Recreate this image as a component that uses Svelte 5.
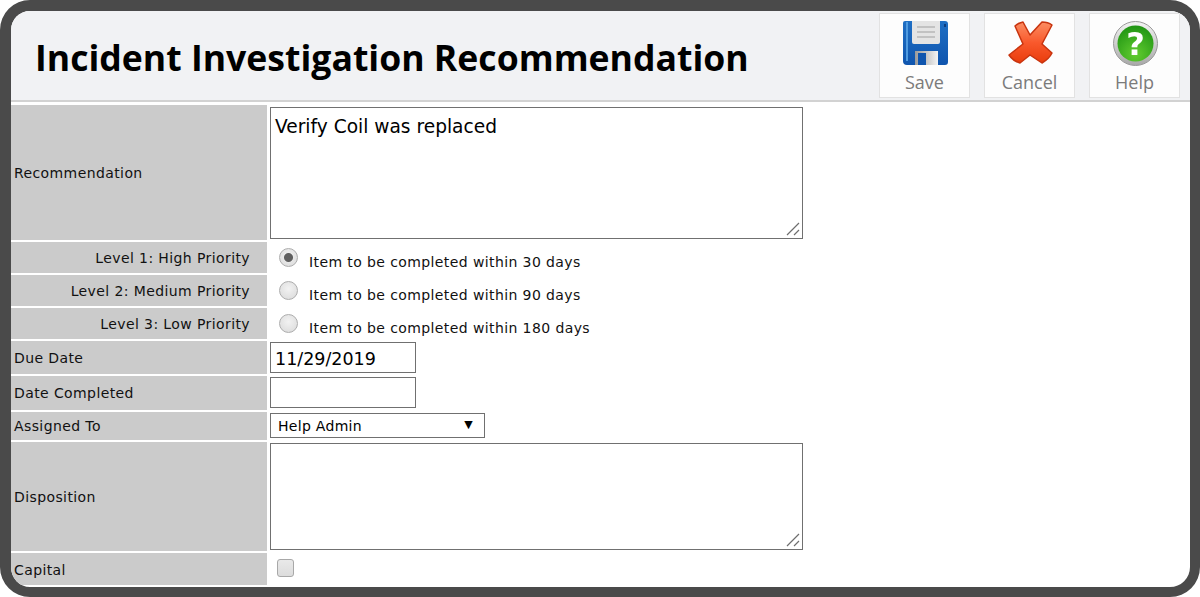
<script>
	let recommendation = $state('Verify Coil was replaced');
	let priority = $state(1);
	let dueDate = $state('11/29/2019');
	let completed = $state('');
	let assigned = $state('Help Admin');
	let disposition = $state('');
	let capital = $state(false);

	const levels = [
		{ id: 1, label: 'Level 1: High Priority', text: 'Item to be completed within 30 days' },
		{ id: 2, label: 'Level 2: Medium Priority', text: 'Item to be completed within 90 days' },
		{ id: 3, label: 'Level 3: Low Priority', text: 'Item to be completed within 180 days' }
	];
</script>

{#snippet grip()}
	<svg class="grip" viewBox="0 0 14 14" width="14" height="14" aria-hidden="true">
		<path d="M1 13L13 1M8 13L13 8" stroke="#6e6e6e" stroke-width="1.2" />
	</svg>
{/snippet}

<div class="frame">
	<header class="header">
		<h1>Incident Investigation Recommendation</h1>
		<div class="actions">
			<button type="button">
				<svg viewBox="0 0 45 45" width="45" height="45" aria-hidden="true">
					<defs>
						<linearGradient id="disk" x1="0" y1="0" x2="0" y2="1">
							<stop offset="0" stop-color="#1f6fc4" />
							<stop offset="1" stop-color="#0f55ae" />
						</linearGradient>
						<linearGradient id="shutter" x1="0" y1="0" x2="1" y2="0">
							<stop offset="0" stop-color="#9a9a9a" />
							<stop offset="1" stop-color="#f4f4f4" />
						</linearGradient>
					</defs>
					<path d="M2 0H42Q45 0 45 3V41Q45 44 42 44H4Q0 44 0 40V2Q0 0 2 0Z" fill="url(#disk)" />
					<path d="M4 1V40" stroke="#4f9be0" stroke-width="2" />
					<path d="M9 0H37V21Q37 23 35 23H11Q9 23 9 21Z" fill="#e4e4e4" />
					<path d="M14 6H32M14 11H32M14 16H32" stroke="#c2c2c2" stroke-width="2" />
					<path d="M12 30H35V44H12Z" fill="url(#shutter)" />
					<rect x="15" y="32" width="8" height="12" fill="#0f55ae" />
					<rect x="41" y="3" width="2" height="3" fill="#0b3d80" />
				</svg>
				<span>Save</span>
			</button>
			<button type="button">
				<svg viewBox="0 0 45 45" width="45" height="45" aria-hidden="true">
					<defs>
						<linearGradient id="cross" x1="0" y1="0" x2="0" y2="1">
							<stop offset="0" stop-color="#fb8d62" />
							<stop offset="0.5" stop-color="#f9592c" />
							<stop offset="1" stop-color="#e93c0c" />
						</linearGradient>
					</defs>
					<path
						d="M7 5Q10 2 15 1L22 14L34 1Q40 1 44 4L34 23L44 32Q41 38 34 42L22 34L12 42Q5 40 1 34L15 23Z"
						fill="url(#cross)"
						stroke="#c8340f"
						stroke-width="1.5"
						stroke-linejoin="round"
					/>
				</svg>
				<span>Cancel</span>
			</button>
			<button type="button">
				<svg viewBox="0 0 45 45" width="45" height="45" aria-hidden="true">
					<defs>
						<linearGradient id="ring" x1="0" y1="0" x2="0" y2="1">
							<stop offset="0" stop-color="#f4f4f4" />
							<stop offset="1" stop-color="#a8a8a8" />
						</linearGradient>
						<radialGradient id="ball" cx="0.5" cy="0.8" r="0.8">
							<stop offset="0" stop-color="#62cc30" />
							<stop offset="1" stop-color="#1f9413" />
						</radialGradient>
					</defs>
					<circle cx="22.5" cy="22.5" r="22" fill="url(#ring)" stroke="#9a9a9a" stroke-width="1" />
					<circle cx="22.5" cy="22.5" r="18" fill="url(#ball)" />
					<text class="mark" x="22.5" y="33.5" text-anchor="middle">?</text>
				</svg>
				<span>Help</span>
			</button>
		</div>
	</header>

	<form class="form">
		<div class="label h-rec">Recommendation</div>
		<div class="value">
			<div class="area-wrap">
				<textarea class="area-rec" bind:value={recommendation}></textarea>
				{@render grip()}
			</div>
		</div>

		{#each levels as level}
			<div class="label right h-level">{level.label}</div>
			<div class="value radio-row">
				<input type="radio" name="priority" value={level.id} bind:group={priority} />
				<span>{level.text}</span>
			</div>
		{/each}

		<div class="label h-due">Due Date</div>
		<div class="value"><input class="date" type="text" bind:value={dueDate} /></div>

		<div class="label h-done">Date Completed</div>
		<div class="value"><input class="date" type="text" bind:value={completed} /></div>

		<div class="label h-assign">Assigned To</div>
		<div class="value">
			<div class="select-wrap">
				<select bind:value={assigned}>
					<option>Help Admin</option>
				</select>
				<span class="arrow">▼</span>
			</div>
		</div>

		<div class="label h-disp">Disposition</div>
		<div class="value">
			<div class="area-wrap">
				<textarea class="area-disp" bind:value={disposition}></textarea>
				{@render grip()}
			</div>
		</div>

		<div class="label h-cap">Capital</div>
		<div class="value"><input class="check" type="checkbox" bind:checked={capital} /></div>
	</form>
</div>

<style>
	:global(body) {
		background: #fff;
	}

	.frame {
		box-sizing: border-box;
		width: 1200px;
		height: 597px;
		border-style: solid;
		border-color: #4a4a4a;
		border-width: 11px 10px 10px 11px;
		border-radius: 30px;
		overflow: hidden;
		background: #fff;
		font-family: 'DejaVu Sans', Verdana, sans-serif;
	}

	.header {
		display: flex;
		justify-content: space-between;
		box-sizing: border-box;
		height: 91px;
		padding: 2px 10px 0 24px;
		background: #f1f2f4;
		border-bottom: 2px solid #d2d2d2;
	}

	h1 {
		margin: 0;
		padding-top: 20px;
		font-family: 'Open Sans', sans-serif;
		font-size: 35.6px;
		line-height: 48px;
		font-weight: 700;
		color: #000;
	}

	.actions {
		display: flex;
		gap: 14px;
	}

	button {
		display: flex;
		flex-direction: column;
		align-items: center;
		box-sizing: border-box;
		width: 91px;
		height: 85px;
		padding: 7px 0 0 1px;
		background: #fdfdfd;
		border: 1px solid #e2e2e2;
		font-family: 'Open Sans', sans-serif;
		font-size: 18px;
		line-height: 26px;
		color: #7b7b7b;
	}

	button svg {
		display: block;
		margin-bottom: 3px;
		filter: blur(0.4px);
	}

	button span {
		margin-left: -1px;
	}

	.mark {
		font-family: 'DejaVu Sans', sans-serif;
		font-size: 32px;
		font-weight: 700;
		fill: #fff;
	}

	.form {
		display: grid;
		grid-template-columns: 256px 1fr;
		column-gap: 1px;
		row-gap: 2px;
		padding-top: 3px;
		font-size: 14px;
		letter-spacing: 0.4px;
		color: #111;
	}

	.label {
		display: flex;
		align-items: center;
		box-sizing: border-box;
		padding-left: 3px;
		background: #cbcbcb;
	}

	.right {
		justify-content: flex-end;
		padding-right: 17px;
	}

	.h-rec { height: 135px; }
	.h-level { height: 31px; }
	.h-due { height: 33px; }
	.h-done { height: 34px; }
	.h-assign { height: 28px; }
	.h-disp { height: 109px; }
	.h-cap { height: 32px; padding-top: 2px; }

	.value {
		padding-left: 2px;
	}

	textarea,
	.date,
	select {
		display: block;
		box-sizing: border-box;
		margin: 0;
		border: 1px solid #707070;
		border-radius: 0;
		outline: none;
		background: #fff;
		color: #000;
		font-family: 'DejaVu Sans', Verdana, sans-serif;
	}

	.area-wrap {
		position: relative;
		width: 533px;
	}

	.grip {
		position: absolute;
		right: 3px;
		bottom: 3px;
		pointer-events: none;
	}

	textarea {
		width: 533px;
		padding: 6px 4px;
		font-size: 18.6px;
		line-height: 26px;
		resize: none;
	}

	.area-rec {
		height: 132px;
		margin-top: 2px;
	}

	.area-disp {
		height: 107px;
		margin-top: 1px;
	}

	.date {
		width: 146px;
		height: 31px;
		margin-top: 1px;
		padding: 2px 4px 0;
		font-size: 17.5px;
	}

	.select-wrap {
		position: relative;
		width: 215px;
		margin-top: 1px;
	}

	select {
		width: 100%;
		height: 25px;
		padding: 0 7px;
		font-size: 14px;
		letter-spacing: 0.3px;
		appearance: none;
	}

	.arrow {
		position: absolute;
		top: 5px;
		right: 12px;
		font-size: 11px;
		line-height: 14px;
		color: #000;
		pointer-events: none;
	}

	.radio-row {
		display: flex;
		align-items: flex-start;
		padding-left: 11px;
		gap: 11px;
	}

	.radio-row span {
		padding-top: 12px;
		line-height: 17px;
	}

	input[type='radio'] {
		appearance: none;
		box-sizing: border-box;
		width: 19px;
		height: 19px;
		margin: 6px 0 0;
		border: 1px solid #adadad;
		border-radius: 50%;
		background: radial-gradient(circle at 50% 40%, #f2f2f2, #d9d9d9);
	}

	input[type='radio']:checked {
		background:
			radial-gradient(circle, #5f5f5f 0, #5f5f5f 4px, transparent 5px),
			radial-gradient(circle at 50% 40%, #f2f2f2, #d9d9d9);
	}

	.check {
		appearance: none;
		display: block;
		box-sizing: border-box;
		width: 17px;
		height: 18px;
		margin: 6px 0 0 7px;
		border: 1px solid #a8a8a8;
		border-radius: 3px;
		background: linear-gradient(#e9e9e9, #dcdcdc);
	}
</style>
